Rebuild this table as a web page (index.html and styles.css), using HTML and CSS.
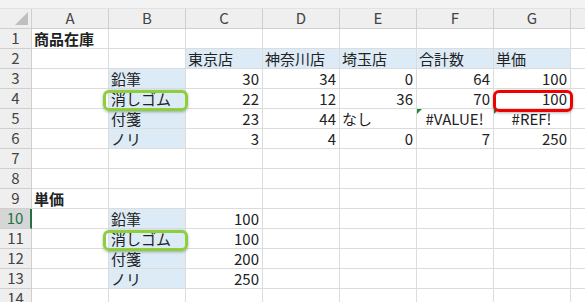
FILE: index.html
```html
<!DOCTYPE html>
<html lang="ja">
<head>
    <meta charset="UTF-8">
    <title>商品在庫</title>
    <link rel="stylesheet" href="styles.css">
</head>
<body>
    <div class="toolbar-edge"></div>
    <div class="sheet">
        <!-- column headers -->
        <div class="corner"><span class="corner-mark"></span></div>
        <div class="col-head">A</div>
        <div class="col-head">B</div>
        <div class="col-head">C</div>
        <div class="col-head">D</div>
        <div class="col-head">E</div>
        <div class="col-head">F</div>
        <div class="col-head">G</div>
        <div class="col-head"></div>

        <!-- row 1 -->
        <div class="row-head">1</div>
        <div class="cell bold">商品在庫</div>
        <div class="cell"></div><div class="cell"></div><div class="cell"></div>
        <div class="cell"></div><div class="cell"></div><div class="cell"></div><div class="cell"></div>

        <!-- row 2 -->
        <div class="row-head">2</div>
        <div class="cell"></div><div class="cell"></div>
        <div class="cell fill">東京店</div>
        <div class="cell fill">神奈川店</div>
        <div class="cell fill">埼玉店</div>
        <div class="cell fill">合計数</div>
        <div class="cell fill">単価</div>
        <div class="cell"></div>

        <!-- row 3 -->
        <div class="row-head">3</div>
        <div class="cell"></div>
        <div class="cell fill">鉛筆</div>
        <div class="cell num">30</div>
        <div class="cell num">34</div>
        <div class="cell num">0</div>
        <div class="cell num">64</div>
        <div class="cell num">100</div>
        <div class="cell"></div>

        <!-- row 4 -->
        <div class="row-head">4</div>
        <div class="cell"></div>
        <div class="cell fill">消しゴム<span class="ring ring-green"></span></div>
        <div class="cell num">22</div>
        <div class="cell num">12</div>
        <div class="cell num">36</div>
        <div class="cell num">70</div>
        <div class="cell num">100<span class="ring ring-red"></span></div>
        <div class="cell"></div>

        <!-- row 5 -->
        <div class="row-head">5</div>
        <div class="cell"></div>
        <div class="cell fill">付箋</div>
        <div class="cell num">23</div>
        <div class="cell num">44</div>
        <div class="cell">なし</div>
        <div class="cell error"><span class="flag"></span>#VALUE!</div>
        <div class="cell error"><span class="flag"></span>#REF!</div>
        <div class="cell"></div>

        <!-- row 6 -->
        <div class="row-head">6</div>
        <div class="cell"></div>
        <div class="cell fill">ノリ</div>
        <div class="cell num">3</div>
        <div class="cell num">4</div>
        <div class="cell num">0</div>
        <div class="cell num">7</div>
        <div class="cell num">250</div>
        <div class="cell"></div>

        <!-- rows 7-8 -->
        <div class="row-head">7</div>
        <div class="cell"></div><div class="cell"></div><div class="cell"></div><div class="cell"></div>
        <div class="cell"></div><div class="cell"></div><div class="cell"></div><div class="cell"></div>
        <div class="row-head">8</div>
        <div class="cell"></div><div class="cell"></div><div class="cell"></div><div class="cell"></div>
        <div class="cell"></div><div class="cell"></div><div class="cell"></div><div class="cell"></div>

        <!-- row 9 -->
        <div class="row-head">9</div>
        <div class="cell bold">単価</div>
        <div class="cell"></div><div class="cell"></div><div class="cell"></div>
        <div class="cell"></div><div class="cell"></div><div class="cell"></div><div class="cell"></div>

        <!-- rows 10-13: price list -->
        <div class="row-head active">10</div>
        <div class="cell"></div>
        <div class="cell fill">鉛筆</div>
        <div class="cell num">100</div>
        <div class="cell"></div><div class="cell"></div><div class="cell"></div><div class="cell"></div><div class="cell"></div>

        <div class="row-head">11</div>
        <div class="cell"></div>
        <div class="cell fill">消しゴム<span class="ring ring-green"></span></div>
        <div class="cell num">100</div>
        <div class="cell"></div><div class="cell"></div><div class="cell"></div><div class="cell"></div><div class="cell"></div>

        <div class="row-head">12</div>
        <div class="cell"></div>
        <div class="cell fill">付箋</div>
        <div class="cell num">200</div>
        <div class="cell"></div><div class="cell"></div><div class="cell"></div><div class="cell"></div><div class="cell"></div>

        <div class="row-head">13</div>
        <div class="cell"></div>
        <div class="cell fill">ノリ</div>
        <div class="cell num">250</div>
        <div class="cell"></div><div class="cell"></div><div class="cell"></div><div class="cell"></div><div class="cell"></div>

        <div class="row-head">14</div>
        <div class="cell"></div><div class="cell"></div><div class="cell"></div><div class="cell"></div>
        <div class="cell"></div><div class="cell"></div><div class="cell"></div><div class="cell"></div>
    </div>
</body>
</html>
```

FILE: styles.css
```css
/* Spreadsheet look */
body {
    margin: 0;
    width: 585px;
    height: 302px;
    overflow: hidden;
    background: #ffffff;
    font-family: "Noto Sans CJK JP", "Noto Sans", sans-serif;
    font-size: 15px;
    color: #222;
}

.toolbar-edge {
    height: 9px;
    background: #f3f3f3;
    border-bottom: 1px solid #e2e2e2;
    box-sizing: border-box;
}

.sheet {
    display: grid;
    grid-template-columns: 32px repeat(7, 77px) 40px;
    grid-auto-rows: 20px;
}

.sheet > div {
    box-sizing: border-box;
    border-right: 1px solid #dcdcdc;
    border-bottom: 1px solid #dcdcdc;
    line-height: 18px;
    white-space: nowrap;
    overflow: visible;
    position: relative;
}

/* headers */
.corner,
.col-head,
.row-head {
    background: #efefef;
    color: #444;
    text-align: center;
}

.sheet > .corner,
.sheet > .col-head,
.sheet > .row-head {
    border-color: #cfcfcf;
}

.corner-mark {
    position: absolute;
    right: 3px;
    bottom: 3px;
    width: 0;
    height: 0;
    border-left: 13px solid transparent;
    border-bottom: 13px solid #bfbfbf;
}

.row-head {
    font-size: 15px;
}

.sheet > .row-head.active {
    background: #d6d6d6;
    color: #217346;
    border-right: 2px solid #217346;
}

/* cells */
.cell {
    padding: 1px 3px 0 2px;
}

.bold {
    font-weight: bold;
}

.fill {
    background: #ddebf7;
}

.num {
    text-align: right;
}

.error {
    text-align: center;
}

/* green error triangle */
.flag {
    position: absolute;
    left: 0;
    top: 0;
    width: 0;
    height: 0;
    border-top: 5px solid #1f8a3c;
    border-right: 5px solid transparent;
}

/* hand-drawn marker rings */
.ring {
    position: absolute;
    border-radius: 6px;
    pointer-events: none;
    z-index: 2;
}

.ring-green {
    left: -6px;
    right: -3px;
    top: 1px;
    bottom: -3px;
    border: 3px solid #8ccf3b;
    box-shadow: 0 1px 3px rgba(0, 0, 0, 0.3);
}

.ring-red {
    left: -1px;
    right: -3px;
    top: 1px;
    bottom: -4px;
    border: 3px solid #f00000;
    box-shadow: 0 1px 3px rgba(0, 0, 0, 0.3);
}
```
